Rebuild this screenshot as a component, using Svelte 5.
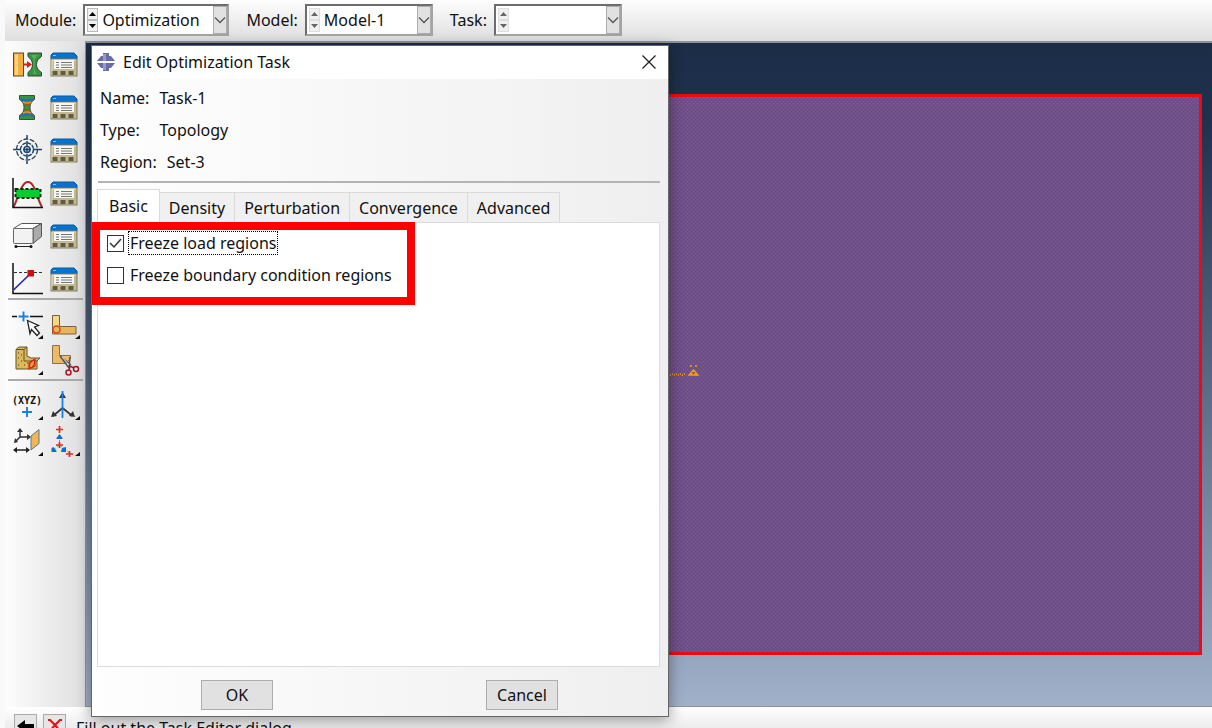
<script>
  const combos = [
    { id: 'module', label: 'Module:', value: 'Optimization', wide: true, dim: false },
    { id: 'model', label: 'Model:', value: 'Model-1', wide: false, dim: true },
    { id: 'task', label: 'Task:', value: '', wide: false, dim: true }
  ];
  const managers = [
    ['taskCreate', 'Create optimization task'],
    ['response', 'Create design response'],
    ['objective', 'Create objective function'],
    ['constraint', 'Create constraint'],
    ['restriction', 'Create geometric restriction'],
    ['stop', 'Create stop condition']
  ];
  const partition = [
    ['edge', 'Partition edge'],
    ['face', 'Partition face'],
    ['cell', 'Partition cell'],
    ['trim', 'Virtual topology']
  ];
  const datum = [
    ['point', 'Create datum point'],
    ['axis', 'Create datum axis'],
    ['plane', 'Create datum plane'],
    ['csys', 'Create datum coordinate system']
  ];
  const tabs = ['Basic', 'Density', 'Perturbation', 'Convergence', 'Advanced'];
  let current = $state('Basic');
  let freezeLoad = $state(true);
  let freezeBoundary = $state(false);
</script>

{#snippet icon(name)}
  <svg width="32" height="32" viewBox="0 0 32 32" aria-hidden="true">
    {#if name === 'manager'}
      <path d="M3 11V7l2-2h21l3 3v3z" fill="#0873cf" stroke="#075a9f" />
      <path d="M5 7.500h3" stroke="#7cc4ff" />
      <rect x="3" y="11" width="26" height="17" fill="#c2ba94" stroke="#857e5e" />
      <path d="M4 27V12h24" fill="none" stroke="#e8e3c6" />
      <rect x="6" y="12" width="20" height="9" fill="#f5f5f2" />
      <path d="M8 14.500h3M8 17h3M8 19.500h3M13 14.500h11M13 17h11M13 19.500h11" stroke="#777" />
      <path d="M4.500 23h5v4h-5zM12.500 23h5v4h-5zM20.500 23h5v4h-5z" fill="#625b3d" />
    {:else if name === 'taskCreate'}
      <rect x="2.500" y="5" width="10" height="23" fill="#f3ae3f" stroke="#5b4630" />
      <path d="M4 27V6.500h3V27z" fill="#ffd487" />
      <path d="M17 5h13.500v3.500C27 11 25.500 13 25.500 16.500s1.500 5.500 5 8V28H17v-3.500c3-2.500 4.500-4.500 4.500-8S20 11 17 8.500z" fill="#369342" stroke="#33442e" />
      <path d="M20 7h7l-3.500 4v11l2 4h-3V11z" fill="#71c169" opacity=".6" />
      <path d="M12.500 16.500h5" stroke="#d3201a" stroke-width="2" />
      <path d="M16 13l5 3.500-5 3.500z" fill="#d3201a" />
    {:else if name === 'response'}
      <path d="M8.500 4.500h15v4c-3 2-4.500 4-4.500 8s1.500 6 4.500 8v4h-15v-4c3-2 4.500-4 4.500-8s-1.500-6-4.500-8z" fill="#36933e" stroke="#4b4b35" />
      <path d="M9.500 8c5 2 8 2 13 0M9.500 25c5-2 8-2 13 0" fill="none" stroke="#276ac4" stroke-width="2" />
      <path d="M12 11c3 1.500 5 1.500 8 0M12 22c3-1.500 5-1.500 8 0" fill="none" stroke="#d99b25" stroke-width="1.500" />
      <path d="M13.500 14h5M13.500 19h5" stroke="#d63825" stroke-width="1.500" />
    {:else if name === 'objective'}
      <g fill="none" stroke="#1b4672">
        <circle cx="16" cy="15.500" r="10.500" stroke="#36424c" stroke-width="1.300" stroke-dasharray="5 1.500" />
        <circle cx="16" cy="15.500" r="6.500" stroke-width="1.500" stroke-dasharray="4 1" />
        <circle cx="16" cy="15.500" r="3" stroke-width="1.500" />
        <path d="M2 15.500h8M12 15.500h8M22 15.500h9M16 1v4M16 7v5M16 14v4M16 20v5M16 27v3" stroke-width="1.500" />
      </g>
    {:else if name === 'constraint'}
      <path d="M2.500 30C7 22 10 5 17 5s9 17 14 25" fill="none" stroke="#ac2727" stroke-width="2" />
      <rect x="4.500" y="12" width="25" height="9" fill="#00ce2d" stroke="#102b11" stroke-width="2" stroke-dasharray="3 2" />
      <path d="M2 1v29.500h30" fill="none" stroke="#111" stroke-width="1.500" />
    {:else if name === 'restriction'}
      <path d="M2.500 8.500l8-5h20l-8.500 5z" fill="#fff" stroke="#555" />
      <path d="M22 8.500l8.500-5v13L22 23.500z" fill="#aaa" stroke="#555" />
      <rect x="2.500" y="8.500" width="19.500" height="15" rx="1" fill="#f2f2f2" stroke="#666" />
      <path d="M4 26.500h17" stroke="#222" />
      <circle cx="5" cy="26.500" r="1.500" fill="#111" /><circle cx="20" cy="26.500" r="1.500" fill="#111" />
    {:else if name === 'stop'}
      <path d="M2 0v30.500h30" fill="none" stroke="#111" stroke-width="1.500" />
      <path d="M3 9.500h29" stroke="#333" stroke-dasharray="3 2" />
      <path d="M2.500 27L18 12" stroke="#2929a5" stroke-width="1.700" />
      <rect x="16.500" y="7" width="6.500" height="6.500" fill="#d20c0c" />
    {:else if name === 'edge'}
      <path d="M1 7.500h5M19 7.500h13" stroke="#111" stroke-width="1.700" />
      <path d="M7.500 7.500h10M12.500 2.500v10" stroke="#1681e5" stroke-width="1.900" />
      <path d="M16.500 11.500l11 5-4 1.500 5 6-2.500 2.500-5.500-6-1.500 4z" fill="#fff" stroke="#222" stroke-width="1.300" />
    {:else if name === 'face'}
      <path d="M4.500 6.500h7v11h16.500V25H4.500z" fill="#eab55a" stroke="#796040" />
      <path d="M5 7h6v10l-6 2z" fill="#f2d985" />
      <circle cx="8.500" cy="20.500" r="3.500" fill="none" stroke="#e5421d" stroke-width="1.500" />
    {:else if name === 'cell'}
      <path d="M5 4.500l3-2.500h8v9l4 2h9l-3 3v8H5z" fill="#dcb85c" stroke="#66542a" />
      <path d="M5 4.500h8l3-2.500M13 4.500V16h13" fill="none" stroke="#66542a" />
      <path d="M7 8h1M10 10h1M7 13h1M10 16h1M7 20h1M13 20h1M16 18h1" stroke="#4b3e1f" />
      <path d="M18 24v-6l6-4v7z" fill="#e89a4a" stroke="#e02e18" stroke-width="1.300" />
      <ellipse cx="21" cy="19" rx="2" ry="4" fill="none" stroke="#cf1e17" transform="rotate(25 21 19)" />
    {:else if name === 'trim'}
      <path d="M4.500 .5h7v10h11v3l-5 5h-13z" fill="#edbc62" stroke="#8b704b" />
      <path d="M12 11l9 12M22 12l-1 11M12 11l11 9" fill="none" stroke="#555" stroke-width="1.500" />
      <path d="M14 12l7 8" stroke="#ddd" />
      <circle cx="20.500" cy="27.500" r="2.500" fill="none" stroke="#a41423" stroke-width="1.500" />
      <circle cx="28" cy="24" r="2.500" fill="none" stroke="#a41423" stroke-width="1.500" />
      <path d="M21 25l1-4 4 2" fill="none" stroke="#a41423" stroke-width="1.500" />
    {:else if name === 'point'}
      <text x="1" y="14" font-family="DejaVu Sans Mono" font-weight="700" font-size="10" fill="#111">(XYZ)</text>
      <path d="M11 22h10M16 17v10" stroke="#1681e5" stroke-width="1.900" />
    {:else if name === 'axis'}
      <path d="M14.500 18L5 26M14.500 18l10 8" stroke="#333" stroke-width="1.700" />
      <path d="M3 27l2-6 4 5zM27 27l-2-6-4 5zM11 8l3.500-6L18 8z" fill="#333" />
      <path d="M14.500 1v27" stroke="#1681e5" stroke-width="1.800" />
    {:else if name === 'plane'}
      <path d="M9 3v8h8M9 11l-5 5" fill="none" stroke="#333" stroke-width="1.500" />
      <path d="M6 6l3-4 3 4zM16 8l4 3-4 3zM3 17l1-5 3 4z" fill="#333" />
      <path d="M4 24h13" stroke="#222" stroke-width="1.500" />
      <path d="M6 21l-4 3 4 3zM15 21l4 3-4 3z" fill="#222" />
      <path d="M20 10l8-6.500v14L20 24z" fill="#f2b653" stroke="#557997" />
    {:else if name === 'csys'}
      <path d="M11.500 9v8M11.500 19l-6 5M11.500 19l10 8" stroke="#6e98c4" stroke-dasharray="3 2" />
      <path d="M8.500 12l3-4 3 4v1h-6zM3.500 26v-4l2-1 3 4v1zM14 22l4-1v5h-5z" fill="#126bd0" />
      <path d="M8 3.500h7M11.500 0v7M8 19h7M11.500 16v6M18 28h7M21.500 25v6" stroke="#d9301d" stroke-width="1.700" />
    {/if}
    {#if ['edge', 'face', 'cell', 'point', 'axis', 'plane', 'csys'].includes(name)}
      <path d="M32 26v4h-5z" fill="#111" />
    {/if}
  </svg>
{/snippet}

{#snippet tool(name, title)}
  <button class="tool" aria-label={title}>{@render icon(name)}</button>
{/snippet}

<div class="app">
  <header class="context">
    {#each combos as c}
      <div class="field">
        <label for={c.id}>{c.label}</label>
        <div class="combo" class:wide={c.wide}>
          <span class="spin" class:dim={c.dim} aria-hidden="true">
            <i><svg width="7" height="4" viewBox="0 0 7 4"><path d="M0 4L3.500 0 7 4z" /></svg></i>
            <i><svg width="7" height="4" viewBox="0 0 7 4"><path d="M0 0h7L3.500 4z" /></svg></i>
          </span>
          <select id={c.id}><option>{c.value}</option></select>
          <span class="drop" aria-hidden="true">
            <svg width="12" height="8" viewBox="0 0 12 8"><path d="M1 1.500l5 5 5-5" fill="none" stroke="#555" stroke-width="1.300" /></svg>
          </span>
        </div>
      </div>
    {/each}
  </header>

  <nav class="toolbox" aria-label="Toolbox">
    <div class="group roomy">
      {#each managers as [name, title]}
        {@render tool(name, title)}
        {@render tool('manager', title + ' manager')}
      {/each}
    </div>
    <div class="group">
      {#each partition as [name, title]}{@render tool(name, title)}{/each}
    </div>
    <div class="group">
      {#each datum as [name, title]}{@render tool(name, title)}{/each}
    </div>
  </nav>

  <main class="viewport">
    <div class="part"></div>
    <svg class="marker" width="30" height="14" viewBox="0 0 30 14" aria-hidden="true">
      <path d="M0 11h1M2 10h1M4 11h1M6 10h1M8 11h1M10 10h1M12 11h1M14 10h1" stroke="#e08a28" stroke-width="2" />
      <path d="M20 2h2M25 2h2M19 11l4.500-5 4.500 5zM22 11v-2M25 11v-2" fill="none" stroke="#ff9d12" stroke-width="1.300" />
    </svg>
  </main>

  <footer class="prompt">
    <button aria-label="Back"><svg width="20" height="20" viewBox="0 0 20 20"><path d="M1 11l8-6v4h9v4H9v4z" fill="#000" /></svg></button>
    <button aria-label="Cancel procedure"><svg width="20" height="20" viewBox="0 0 20 20"><path d="M3 5h2l5 5 5-5h2M10 10l-6 7M10 10l6 7" fill="none" stroke="#f00b16" stroke-width="2" /></svg></button>
    <span>Fill out the Task Editor dialog</span>
  </footer>

  <section class="dialog" role="dialog" aria-labelledby="dialog-title">
    <div class="title">
      <svg width="20" height="20" viewBox="0 0 20 20" aria-hidden="true">
        <path d="M1 9l4-5h2V1h6v3h2l4 5zM1 11h18l-4 5h-2v3H7v-3H5z" fill="#6a6aae" />
        <path d="M7 9V2h3v7zM7 11h3v7H7z" fill="#9898cd" />
      </svg>
      <h1 id="dialog-title">Edit Optimization Task</h1>
      <button aria-label="Close"><svg width="14" height="14" viewBox="0 0 14 14"><path d="M.5.5l13 13M13.500.5l-13 13" stroke="#222" stroke-width="1.300" /></svg></button>
    </div>
    <div class="body">
      <dl class="info">
        <dt>Name:</dt><dd>Task-1</dd>
        <dt>Type:</dt><dd>Topology</dd>
      </dl>
      <dl class="info last"><dt>Region:</dt><dd>Set-3</dd></dl>
      <div class="tabs" role="tablist">
        {#each tabs as t}
          <button role="tab" aria-selected={current === t} class:on={current === t} onclick={() => (current = t)}>{t}</button>
        {/each}
      </div>
      <div class="panel" role="tabpanel">
        {#if current === 'Basic'}
          <label class="check"><input type="checkbox" bind:checked={freezeLoad} /><span class="focus">Freeze load regions</span></label>
          <label class="check"><input type="checkbox" bind:checked={freezeBoundary} /><span>Freeze boundary condition regions</span></label>
        {/if}
      </div>
      <div class="actions"><button>OK</button><button>Cancel</button></div>
    </div>
    <div class="highlight"></div>
  </section>
</div>

<style>
  :global(body) { margin: 0; }
  .app, .app * { box-sizing: border-box; }
  .app {
    position: relative;
    display: grid;
    grid-template: 41px minmax(0, 1fr) 21px / 80px minmax(0, 1fr);
    height: 100vh;
    padding-left: 5px;
    overflow: hidden;
    background: #f9f9f9;
    color: #111;
    font: 16px/20px "Noto Sans", "Open Sans", sans-serif;
  }
  button, select { font: inherit; color: inherit; }
  .context {
    grid-column: 1 / -1;
    display: flex;
    align-items: center;
    gap: 17px;
    padding: 0 0 2px 10px;
    background: linear-gradient(#fefefe, #dedede);
  }
  .field { display: flex; align-items: center; gap: 7px; }
  .combo {
    position: relative;
    display: flex;
    width: 128px;
    height: 32px;
    padding: 2px;
    background: #fff;
    border: 2px solid;
    border-color: #6c6c6c #a4a4a4 #a4a4a4 #6c6c6c;
  }
  .combo.wide { width: 146px; }
  .spin { display: flex; flex-direction: column; width: 11px; flex: none; }
  .spin i { flex: 1; display: grid; place-items: center; background: #f0f0f0; border: 1px solid #bbb; }
  .spin svg { fill: #000; }
  .spin.dim i { border-color: #ddd; }
  .spin.dim svg { fill: #666; }
  select { appearance: none; flex: 1; min-width: 0; padding: 0 16px 0 4px; border: 0; background: none; outline: 0; }
  .drop {
    position: absolute;
    inset: 0 0 0 auto;
    width: 14px;
    display: grid;
    place-items: center;
    background: #e1e1e1;
    border: 1px solid #adadad;
    pointer-events: none;
  }
  .toolbox { background: linear-gradient(90deg, #fdfdfd, #dfdfdf); }
  .group {
    display: grid;
    grid-template-columns: 32px 32px;
    gap: 4px 5px;
    margin: 0 2px 0 3px;
    padding: 9px 3px 2px;
    border-top: 2px solid #aaa;
  }
  .group.roomy { row-gap: 11px; padding: 7px 3px 3px; border: 0; }
  .tool { display: block; width: 32px; height: 32px; padding: 0; border: 0; background: none; }
  .tool svg { display: block; }
  .viewport {
    position: relative;
    display: flex;
    padding: 51px 10px;
    background: linear-gradient(#1b2d47, #1f314c 12%, #a2b1ca);
    border: 2px solid #8f9296;
    border-width: 2px 0 1px 1px;
  }
  .part {
    flex: 1;
    border: 3px solid #f00814;
    background: #6e4f88 url("data:image/svg+xml,%3Csvg xmlns='http://www.w3.org/2000/svg' width='4' height='4' shape-rendering='crispEdges'%3E%3Cpath fill='%232f7bdc' d='M0 0h1v1H0zM2 2h1v1H2z'/%3E%3Cpath fill='%23d02450' d='M2 0h1v1H2zM0 2h1v1H0z'/%3E%3C/svg%3E");
  }
  .marker { position: absolute; left: 584px; top: 321px; }
  .prompt {
    grid-column: 1 / -1;
    display: flex;
    align-items: flex-start;
    gap: 6px;
    padding: 7px 9px 0;
    background: linear-gradient(#fff, #ececec);
  }
  .prompt button { width: 23px; height: 24px; padding: 0; background: #e6e6e6; border: 1px solid #aaa; }
  .prompt span { padding: 4px 0 0 4px; }
  .dialog {
    position: absolute;
    left: 91px;
    top: 45px;
    width: 578px;
    bottom: 11px;
    display: flex;
    flex-direction: column;
    border: 1px solid #666;
    background: #fff;
    box-shadow: 0 3px 14px rgb(0 0 0 / .4);
  }
  .title { display: flex; align-items: center; height: 33px; padding: 0 12px 2px 4px; gap: 7px; }
  h1 { flex: 1; margin: 0; font: inherit; }
  .title button { display: grid; padding: 0; border: 0; background: none; }
  .body {
    flex: 1;
    display: flex;
    flex-direction: column;
    padding: 3px 8px 6px 5px;
    background: linear-gradient(90deg, #fefefe, #efefef);
  }
  .info { display: grid; grid-template-columns: max-content 1fr; column-gap: 10px; margin: 0; padding-left: 3px; line-height: 32px; }
  .info.last { margin: 0 0 6px 1px; padding-left: 2px; padding-bottom: 3px; border-bottom: 2px solid #b4b4b4; }
  dd { margin: 0; }
  .tabs { display: flex; align-items: flex-end; }
  .tabs button {
    height: 30px;
    padding: 0 9px;
    background: #f0f0f0;
    border: 1px solid #dadada;
    border-width: 1px 1px 0 0;
  }
  .tabs button.on { height: 33px; padding: 0 11px; background: #fff; border-left-width: 1px; }
  .panel {
    flex: 1;
    display: flex;
    flex-direction: column;
    gap: 6px;
    padding: 7px 9px;
    background: #fff;
    border: 1px solid #dcdcdc;
  }
  .check { display: flex; align-items: center; gap: 4px; height: 26px; }
  .check input {
    appearance: none;
    width: 17px;
    height: 17px;
    margin: 0;
    background: #fff;
    border: 1px solid #333;
    outline: 0;
  }
  .check input:checked {
    background: url("data:image/svg+xml,%3Csvg xmlns='http://www.w3.org/2000/svg' viewBox='0 0 15 15'%3E%3Cpath d='M2 7l4 4 7-8' fill='none' stroke='%23333' stroke-width='1.500'/%3E%3C/svg%3E");
  }
  .check span { padding: 1px; border: 1px solid transparent; }
  .check .focus { border: 1px dotted #000; }
  .actions { display: flex; justify-content: space-between; padding: 13px 102px 0 104px; }
  .actions button { width: 72px; height: 30px; padding: 0; background: #e1e1e1; border: 1px solid #adadad; }
  .highlight {
    position: absolute;
    left: 0;
    top: 176px;
    width: 323px;
    height: 83px;
    border: 8px solid #f00;
    pointer-events: none;
  }
</style>
